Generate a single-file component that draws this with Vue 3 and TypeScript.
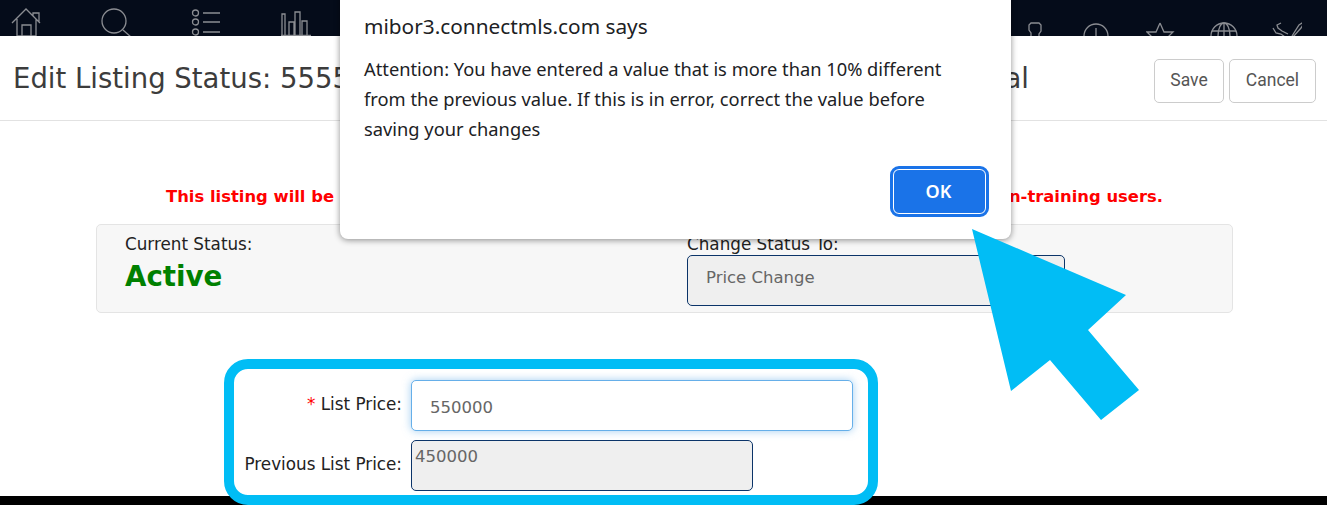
<script setup lang="ts">
const dialogLines: string[] = [
  'Attention: You have entered a value that is more than 10% different',
  'from the previous value. If this is in error, correct the value before',
  'saving your changes'
]
</script>

<template>
  <div class="page">
    <nav class="topnav">
      <div class="nav-group left">
        <svg viewBox="0 0 30 36" width="30" height="36"><path d="M1 23 15 9l14 14M22 16v-3h6v9M6 19v17h19V19M11 36V25h9v11" /></svg>
        <svg viewBox="0 0 30 36" width="30" height="36"><circle cx="13" cy="21" r="12" /><path d="m22 30 8 7" /></svg>
        <svg viewBox="0 0 30 36" width="30" height="36"><circle cx="4.5" cy="13" r="3" /><circle cx="4.5" cy="22" r="3" /><circle cx="4.5" cy="32" r="3" /><path d="M12 13h17M12 22h17M12 32h17" /></svg>
        <svg viewBox="0 0 30 36" width="30" height="36"><path d="M1 35V14h3v21M8 35V22h5v13M14 35V12h5v23M21 35V21h5v14M0 35.500h30" /></svg>
      </div>
      <div class="nav-group right">
        <svg viewBox="0 0 30 36" width="30" height="36"><path d="M11 37v-4l-2-3v-5l2-2h8l2 2v6l-2 3v3" /></svg>
        <svg viewBox="0 0 30 36" width="30" height="36"><circle cx="13" cy="36" r="12" /><path d="M13 28v9" /></svg>
        <svg viewBox="0 0 30 36" width="30" height="36"><path d="M14 23l-4 9H1l6 6M14 23l4 9h9l-6 6" /></svg>
        <svg viewBox="0 0 30 36" width="30" height="36"><circle cx="15" cy="36" r="13" /><ellipse cx="15" cy="36" rx="6" ry="13" /><path d="M3 31h24M15 23v13" /></svg>
        <svg viewBox="0 0 30 36" width="30" height="36"><path d="M1 28l3 5 5 1 4 3M9 23l-4 2 1 3 4 3 6 3M20 36 27 25l3-2 1 2-2 3-8 9" /></svg>
      </div>
    </nav>

    <header class="title-bar">
      <h1 class="title"><span>Edit Listing Status: 5555</span><span>al</span></h1>
      <div class="actions">
        <button class="btn save">Save</button>
        <button class="btn cancel">Cancel</button>
      </div>
    </header>

    <main class="content">
      <p class="notice"><span>This listing will be</span><span>n-training users.</span></p>

      <section class="status-panel">
        <div class="status-col current">
          <div class="status-label">Current Status:</div>
          <div class="status-value">Active</div>
        </div>
        <div class="status-col change">
          <div class="status-label">Change Status To:</div>
          <div class="readonly-select">Price Change</div>
        </div>
      </section>

      <section class="price-box">
        <div class="price-row">
          <label class="price-label"><span class="req">*</span> List Price:</label>
          <input class="price-input" value="550000" />
        </div>
        <div class="price-row">
          <label class="price-label">Previous List Price:</label>
          <div class="price-prev">450000</div>
        </div>
      </section>
    </main>

    <div class="footer-bar"></div>

    <!-- browser alert -->
    <div class="dialog">
      <div class="dialog-title">mibor3.connectmls.com says</div>
      <div class="dialog-body">
        <div v-for="line in dialogLines" :key="line">{{ line }}</div>
      </div>
      <div class="dialog-foot">
        <button class="ok">OK</button>
      </div>
    </div>

    <!-- big callout arrow -->
    <svg class="callout" width="200" height="220" viewBox="0 0 200 220">
      <polygon points="12,9 166,75 128,110 179,170 141,200 90,140 51,171" fill="#01bdf5" />
    </svg>
  </div>
</template>

<style>
html, body {
  margin: 0;
  overflow: hidden;
  background: #fff;
}
</style>

<style scoped>
.page {
  position: relative;
  width: 1327px;
  height: 505px;
  overflow: hidden;
  font-family: "DejaVu Sans", Verdana, sans-serif;
  color: #222;
}
.topnav {
  display: flex;
  justify-content: space-between;
  height: 36px;
  padding: 0 25px 0 11px;
  background: #050c1a;
  overflow: hidden;
}
.nav-group {
  display: flex;
}
.nav-group.left {
  gap: 60px;
}
.nav-group.right {
  gap: 33px;
}
.nav-group svg {
  fill: none;
  stroke: #8b8d92;
  stroke-width: 1.3;
  overflow: hidden;
}
.title-bar {
  display: flex;
  align-items: center;
  justify-content: space-between;
  height: 84px;
  padding: 0 11px 0 13px;
  border-bottom: 1px solid #e2e2e2;
}
.title {
  display: flex;
  justify-content: space-between;
  width: 1016px;
  margin: 0;
  font-size: 27.5px;
  font-weight: 400;
  color: #3c3c3c;
}
.actions {
  display: flex;
  gap: 5px;
  margin-top: 6px;
}
.btn {
  height: 44px;
  padding: 0 0 3px;
  border: 1px solid #ccc;
  border-radius: 5px;
  background: #fff;
  color: #555;
  font-family: Roboto, sans-serif;
  font-size: 17.500px;
}
.save {
  width: 70px;
}
.cancel {
  width: 87px;
}
.content {
  position: relative;
  z-index: 1;
  padding: 0 94px 0 96px;
}
.notice {
  display: flex;
  justify-content: space-between;
  box-sizing: border-box;
  margin: 65px 0 0;
  padding: 1px 70px 0 70px;
  height: 38px;
  font-size: 16.4px;
  font-weight: 700;
  color: #f00;
}
.status-panel {
  display: flex;
  box-sizing: border-box;
  height: 89px;
  padding: 10px 0 0 28px;
  background: #f7f7f7;
  border: 1px solid #e4e4e4;
  border-radius: 5px;
}
.status-col.current {
  width: 562px;
}
.status-col.change {
  width: 378px;
}
.status-label {
  font-size: 16.8px;
  line-height: 19px;
  color: #222;
}
.status-value {
  margin-top: 6px;
  font-size: 27.7px;
  font-weight: 700;
  color: #008000;
}
.readonly-select {
  box-sizing: border-box;
  height: 51px;
  margin-top: 1px;
  padding: 12px 18px;
  background: #efefef;
  border: 1px solid #0b3469;
  border-radius: 5px;
  font-size: 16.5px;
  color: #666;
}
.price-box {
  box-sizing: border-box;
  width: 654px;
  height: 146px;
  margin: 46px 0 0 128px;
  padding: 11px 15px 0 0;
  background: #fff;
  border: 10px solid #01bdf5;
  border-radius: 24px;
  display: flex;
  flex-direction: column;
  gap: 9px;
}
.price-row {
  display: flex;
  align-items: center;
  gap: 9px;
}
.price-label {
  flex: none;
  width: 168px;
  padding-bottom: 4px;
  text-align: right;
  font-size: 16.8px;
  color: #222;
}
.req {
  color: #f00;
}
.price-input {
  box-sizing: border-box;
  width: 442px;
  height: 51px;
  padding: 3px 18px 0;
  border: 1px solid #66afe9;
  border-radius: 5px;
  box-shadow: 0 0 8px rgba(102, 175, 233, 0.6);
  outline: none;
  font-family: "DejaVu Sans", Verdana, sans-serif;
  font-size: 16.5px;
  color: #666;
}
.price-prev {
  box-sizing: border-box;
  width: 342px;
  height: 51px;
  padding: 6px 3px;
  background: #efefef;
  border: 1px solid #0b3469;
  border-radius: 5px;
  font-size: 16.5px;
  color: #666;
}
.footer-bar {
  height: 9px;
  margin-top: -9px;
  background: #000;
}
.dialog {
  position: absolute;
  z-index: 2;
  left: 340px;
  top: -10px;
  box-sizing: border-box;
  width: 671px;
  height: 249px;
  padding: 22px 25px 0 24px;
  background: #fff;
  border-radius: 8px;
  box-shadow: 0 1px 6px rgba(0, 0, 0, 0.45);
  font-family: "Noto Sans", sans-serif;
  color: #202124;
}
.dialog-title {
  font-size: 20.8px;
  line-height: 28px;
}
.dialog-body {
  margin-top: 14px;
  font-size: 18.3px;
  line-height: 30px;
}
.dialog-foot {
  display: flex;
  justify-content: flex-end;
  margin-top: 25px;
}
.ok {
  width: 93px;
  height: 45px;
  padding: 0 2px 2px 0;
  background: #1a73e8;
  border: 1px solid #fff;
  outline: 3px solid #1a73e8;
  outline-offset: 0;
  border-radius: 6px;
  color: #fff;
  font-family: "Noto Sans", sans-serif;
  font-size: 18px;
  font-weight: 600;
}
.callout {
  position: absolute;
  z-index: 3;
  left: 960px;
  top: 220px;
}
</style>
